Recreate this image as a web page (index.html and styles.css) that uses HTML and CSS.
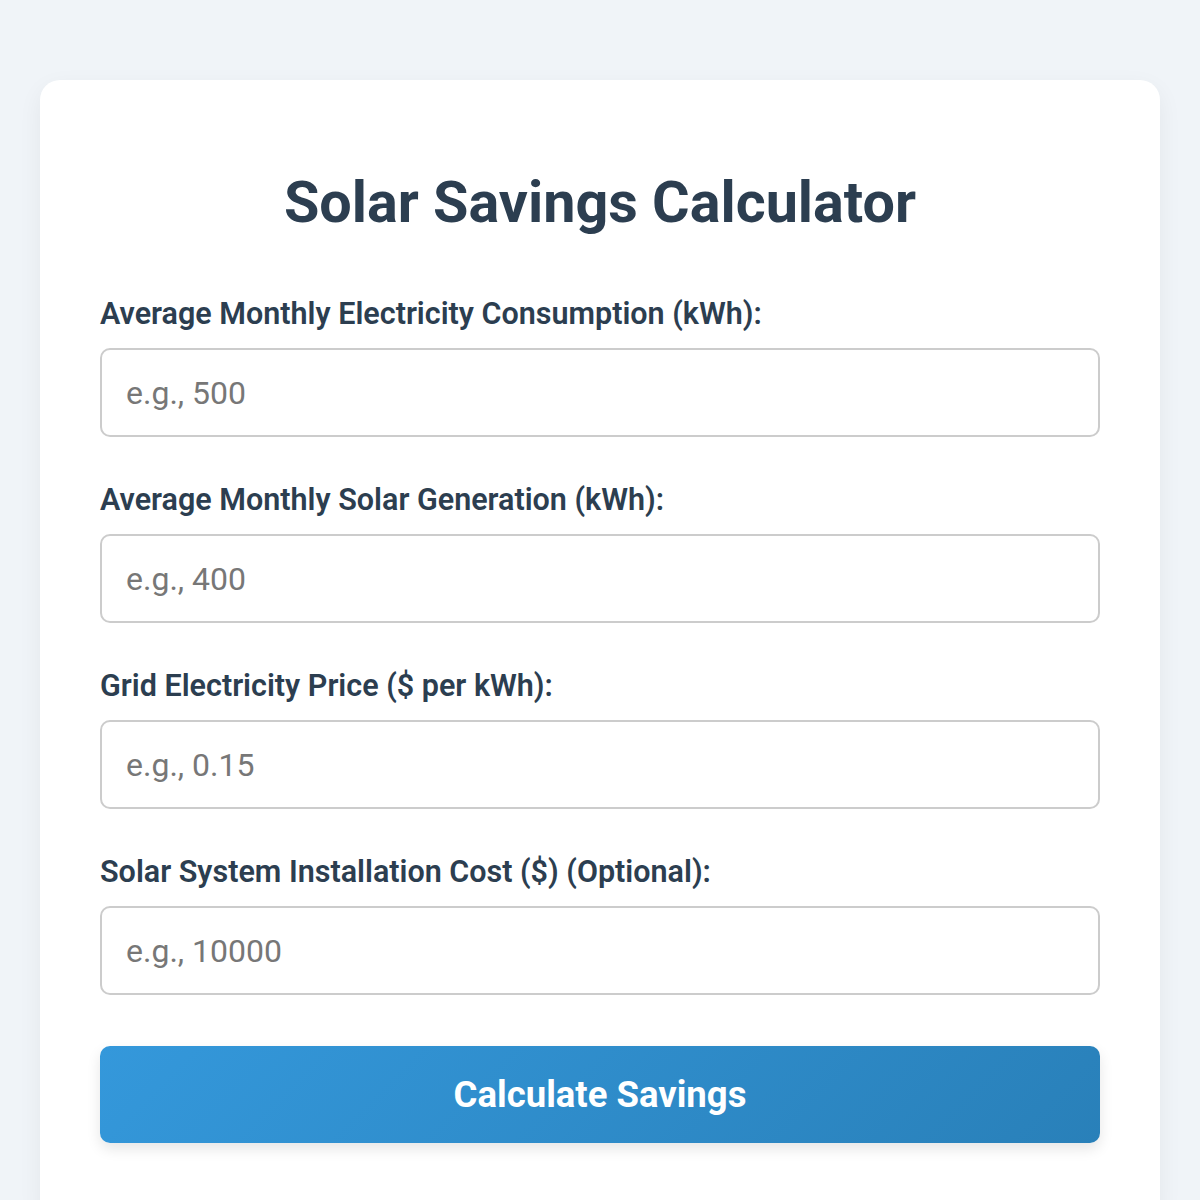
FILE: index.html
```html
<!DOCTYPE html>
<html>
<head>
<meta charset="utf-8">
<link rel="stylesheet" href="styles.css">
</head>
<body>
<div class="card">
  <h1 class="title">Solar Savings Calculator</h1>
  <div class="field">
    <label class="label">Average Monthly Electricity Consumption (kWh):</label>
    <input class="input" type="text" placeholder="e.g., 500">
  </div>
  <div class="field">
    <label class="label">Average Monthly Solar Generation (kWh):</label>
    <input class="input" type="text" placeholder="e.g., 400">
  </div>
  <div class="field">
    <label class="label">Grid Electricity Price ($ per kWh):</label>
    <input class="input" type="text" placeholder="e.g., 0.15">
  </div>
  <div class="field">
    <label class="label">Solar System Installation Cost ($) (Optional):</label>
    <input class="input" type="text" placeholder="e.g., 10000">
  </div>
  <button class="btn">Calculate Savings</button>
</div>
</body>
</html>
```
FILE: styles.css
```css
html, body {
  margin: 0;
  padding: 0;
  background: #f0f4f8;
  font-family: Roboto, "Liberation Sans", sans-serif;
}
body {
  padding: 80px 40px 0;
  height: 1200px;
  box-sizing: border-box;
  overflow: hidden;
}
.card {
  box-sizing: border-box;
  background: #fff;
  border-radius: 20px;
  padding: 32px 60px 40px;
  box-shadow: 0 8px 24px rgba(0, 0, 0, 0.06);
  height: 1140px;
}
.title {
  margin: 60px 0 63px;
  text-align: center;
  font-size: 57.5px;
  line-height: 62px;
  font-weight: 700;
  color: #2c3e50;
}
.field {
  margin-bottom: 46px;
}
.label {
  display: block;
  font-size: 30.5px;
  line-height: 34px;
  font-weight: 600;
  color: #2c3e50;
  margin-bottom: 17px;
}
.input {
  display: block;
  width: 100%;
  box-sizing: border-box;
  height: 89px;
  border: 2px solid #ccc;
  border-radius: 10px;
  padding: 0 24px;
  font-family: Roboto, "Liberation Sans", sans-serif;
  font-size: 32px;
  color: #333;
  background: #fff;
  outline: none;
}
.input::placeholder {
  color: #777;
}
.btn {
  display: block;
  width: 100%;
  height: 97px;
  margin-top: 51px;
  border: none;
  border-radius: 10px;
  background: linear-gradient(135deg, #3498db, #2980b9);
  color: #fff;
  font-family: Roboto, "Liberation Sans", sans-serif;
  font-size: 36.5px;
  font-weight: 700;
  box-shadow: 0 6px 14px rgba(0, 0, 0, 0.1);
  cursor: pointer;
}
```
